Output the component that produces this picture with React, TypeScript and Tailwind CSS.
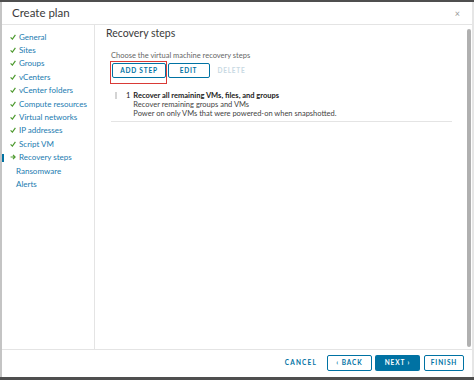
import React from "react";

const Check = () => (
  <svg width="6" height="6" viewBox="0 0 10 10" className="shrink-0">
    <path d="M1 5.5 L4 8.5 L9 1.5" fill="none" stroke="#4e9a2f" strokeWidth="2" />
  </svg>
);

const Arrow = () => (
  <svg width="6" height="6" viewBox="0 0 10 10" className="shrink-0">
    <path d="M1 5 H8 M5 1.5 L8.5 5 L5 8.5" fill="none" stroke="#4e9a2f" strokeWidth="2" />
  </svg>
);

const steps = [
  "General",
  "Sites",
  "Groups",
  "vCenters",
  "vCenter folders",
  "Compute resources",
  "Virtual networks",
  "IP addresses",
  "Script VM",
];

export default function App() {
  return (
    <div
      className="w-[474px] h-[380px] bg-[#4f4f4f] flex flex-col overflow-hidden"
      style={{ fontFamily: "Lato, 'Open Sans', sans-serif" }}
    >
      <div className="h-[2px] bg-[#4f4f4f]" />
      <div className="flex-1 flex min-h-0">
        <div className="w-[2px] bg-[#c4c4c4]" />
        <div className="flex-1 bg-white flex flex-col min-w-0">
          {/* header */}
          <div className="h-[23px] border-b border-[#e4e4e4] flex items-center justify-between pl-[10px] pr-[12px]">
            <span className="text-[11.5px] text-[#3a3a3a]">Create plan</span>
            <span className="text-[9px] text-[#999] leading-none">×</span>
          </div>
          {/* body */}
          <div className="flex-1 flex min-h-0">
            <div className="w-[93px] border-r border-[#e4e4e4] pt-[5px] flex flex-col relative">
              {steps.map((s) => (
                <div key={s} className="h-[13.4px] flex items-center pl-[8px] gap-[3px]">
                  <Check />
                  <span className="text-[8px] text-[#1a7bb0]">{s}</span>
                </div>
              ))}
              <div className="h-[13.4px] flex items-center pl-[8px] gap-[3px] relative">
                <div className="absolute left-0 top-[3px] w-[2px] h-[8px] bg-[#0072a3]" />
                <Arrow />
                <span className="text-[8px] text-[#1a7bb0]">Recovery steps</span>
              </div>
              <div className="h-[13.4px] flex items-center pl-[14px]">
                <span className="text-[8px] text-[#1a7bb0]">Ransomware</span>
              </div>
              <div className="h-[13.4px] flex items-center pl-[14px]">
                <span className="text-[8px] text-[#1a7bb0]">Alerts</span>
              </div>
            </div>
            <div className="flex-1 flex min-w-0">
              <div className="flex-1 pl-[11px] pt-[1px] min-w-0">
                <div className="text-[10.5px] text-[#3a3a3a] h-[14px] leading-[14px]">Recovery steps</div>
                <div className="pl-[5px] pt-[9px]">
                  <div className="text-[7.5px] text-[#666] h-[14px] leading-[14px]">
                    Choose the virtual machine recovery steps
                  </div>
                  <div className="flex items-center mt-[0px] relative">
                    <div className="absolute left-[-1px] top-[-2.5px] w-[57px] h-[23px] border-[1.5px] border-[#d93a36]" />
                    <div className="w-[54px] h-[15px] ml-[1px] border border-[#0072a3] rounded-[2px] flex items-center justify-center text-[6.5px] font-bold tracking-[0.12em] text-[#0072a3]">
                      ADD STEP
                    </div>
                    <div className="w-[42px] h-[15px] ml-[1.5px] border border-[#0072a3] rounded-[2px] flex items-center justify-center text-[6.5px] font-bold tracking-[0.12em] text-[#0072a3]">
                      EDIT
                    </div>
                    <div className="w-[42px] h-[15px] ml-[1px] rounded-[2px] flex items-center justify-center text-[6.5px] font-bold tracking-[0.12em] text-[#c8d9e3]">
                      DELETE
                    </div>
                  </div>
                  <div className="mt-[13px] mr-[13px] border-b border-[#e4e4e4] pb-[3px] flex">
                    <div className="w-[2px] h-[7px] bg-[#d4d4d4] mt-[1px] ml-[4px]" />
                    <div className="text-[7.5px] text-[#222] ml-[9px] leading-[9px]">1</div>
                    <div className="ml-[3px] text-[7.5px] leading-[9px] text-[#444]">
                      <div className="font-bold text-[#222]">Recover all remaining VMs, files, and groups</div>
                      <div>Recover remaining groups and VMs</div>
                      <div>Power on only VMs that were powered-on when snapshotted.</div>
                    </div>
                  </div>
                </div>
              </div>
              <div className="w-[7px] flex justify-center pt-[4px] pb-[2px]">
                <div className="w-[4px] h-full bg-[#b0b0b0] rounded-[2px]" />
              </div>
            </div>
          </div>
          {/* footer */}
          <div className="h-[28px] border-t border-[#e4e4e4] flex items-center justify-end pr-[8px] pb-[1px]">
            <div className="text-[6.5px] font-bold tracking-[0.18em] text-[#0072a3] mr-[10px]">CANCEL</div>
            <div className="w-[45px] h-[16px] border border-[#0072a3] rounded-[2px] flex items-center justify-center text-[6.5px] font-bold tracking-[0.14em] text-[#0072a3]">
              ‹ BACK
            </div>
            <div className="w-[45px] h-[16px] ml-[3px] bg-[#0072a3] rounded-[2px] flex items-center justify-center text-[6.5px] font-bold tracking-[0.14em] text-white">
              NEXT ›
            </div>
            <div className="w-[40px] h-[16px] ml-[4px] border border-[#0072a3] rounded-[2px] flex items-center justify-center text-[6.5px] font-bold tracking-[0.14em] text-[#0072a3]">
              FINISH
            </div>
          </div>
        </div>
        <div className="w-[2px] bg-[#e6e6e6]" />
      </div>
      <div className="h-[3px] bg-[#4f4f4f]" />
    </div>
  );
}
